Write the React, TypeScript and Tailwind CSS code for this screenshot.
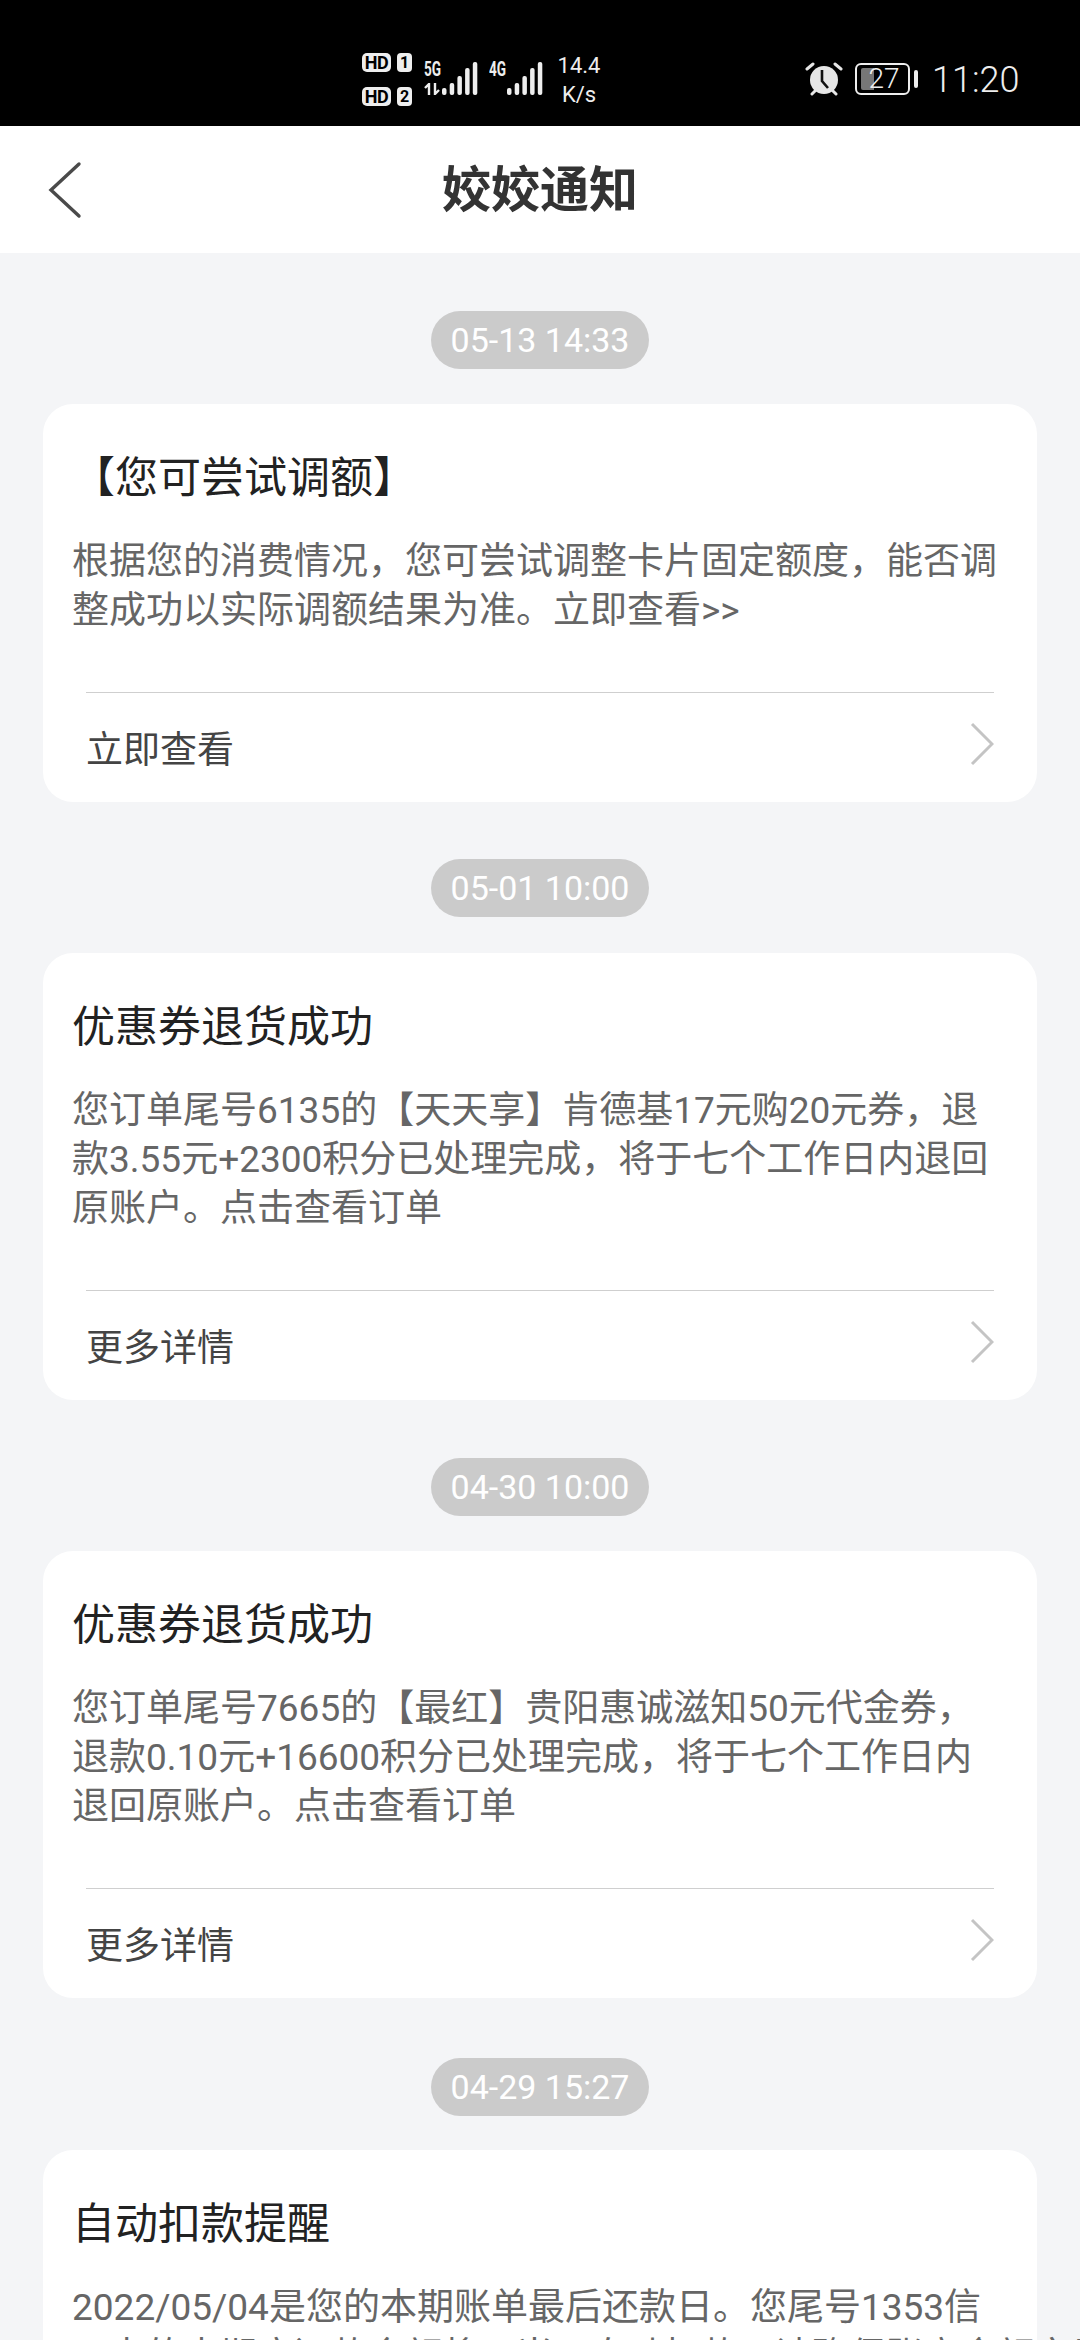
import React from "react";

const cjk = "font-['Roboto','Noto_Sans_CJK_SC',sans-serif]";

// Shared five-bar signal meter; both SIM slots use the same bar heights.
function SignalBars() {
  const heights = [7, 12, 19, 27, 33];
  return (
    <svg width="36" height="33" viewBox="0 0 36 33" className="shrink-0">
      {heights.map((h, i) => (
        <rect key={h} x={i * 7.7} y={33 - h} width={4.5} height={h} rx={2} fill="#eeeeee" />
      ))}
    </svg>
  );
}

function SimBadge({ n }: { n: string }) {
  return (
    <div className="flex gap-[6px]">
      <span className="w-[29px] h-[19px] rounded-[5px] bg-[#eeeeee] text-black text-[18px] font-bold leading-[19px] text-center tracking-[-0.5px]">HD</span>
      <span className="w-[15px] h-[19px] rounded-[4px] bg-[#eeeeee] text-black text-[16px] font-bold leading-[19px] text-center">{n}</span>
    </div>
  );
}

function NetworkLabel({ label, arrows }: { label: string; arrows?: boolean }) {
  return (
    <div className="w-[18px] h-[33px] relative shrink-0">
      <span className="absolute left-0 top-0 text-[20px] font-bold leading-[15px] scale-x-[0.68] origin-left">{label}</span>
      {arrows && (
        <svg className="absolute left-0 bottom-0" width="17" height="12" viewBox="0 0 17 12">
          <path d="M5 12V1L1 5M11 0v11l4-4" stroke="#eeeeee" strokeWidth="2.4" fill="none" />
        </svg>
      )}
    </div>
  );
}

function StatusBar() {
  return (
    <div className="h-[126px] bg-black text-[#eeeeee] font-['Roboto',sans-serif] flex items-start pl-[362px] pt-[53px]">
      <div className="flex flex-col gap-[15px] w-[62px] shrink-0">
        <SimBadge n="1" />
        <SimBadge n="2" />
      </div>
      <div className="flex mt-[9px] shrink-0">
        <NetworkLabel label="5G" arrows />
        <SignalBars />
        <div className="w-[11px]" />
        <NetworkLabel label="4G" />
        <SignalBars />
      </div>
      <div className="w-[60px] ml-[6px] -mt-[2px] text-center text-[22px] leading-[29px] shrink-0">
        <div>14.4</div>
        <div>K/s</div>
      </div>
      <svg className="ml-[196px] mt-[9px] shrink-0" width="38" height="34" viewBox="0 0 38 34">
        <circle cx="19" cy="18" r="14" fill="#e6e6e6" />
        <path d="M17 8v11l6 7" stroke="#111111" strokeWidth="2.6" fill="none" />
        <path d="M2 7l6-5M36 7l-6-5M7 32l3-3M31 32l-3-3" stroke="#e6e6e6" strokeWidth="3" strokeLinecap="round" />
      </svg>
      <div className="ml-[12px] mt-[10px] w-[55px] h-[32px] rounded-[6px] border-2 border-[#eeeeee] relative shrink-0">
        <div className="absolute left-[4px] top-[3px] bottom-[3px] w-[13px] bg-[#777777] rounded-l-[2px]" />
        <span className="absolute inset-0 pl-[3px] text-center text-[28px] leading-[28px] font-light">27</span>
      </div>
      <div className="ml-[4px] mt-[17px] w-[4px] h-[18px] rounded-full bg-[#eeeeee] shrink-0" />
      <span className="ml-[14px] mt-[6px] text-[36px] leading-[42px] font-light shrink-0">11:20</span>
    </div>
  );
}

function Header() {
  return (
    <div className={`h-[127px] bg-white flex items-center justify-center relative ${cjk}`}>
      <svg className="absolute left-[46px] top-1/2 -translate-y-1/2" width="36" height="58" viewBox="0 0 36 58">
        <path d="M33 3L5 29l28 26" stroke="#4a4a4a" strokeWidth="3.4" fill="none" strokeLinecap="round" />
      </svg>
      <h1 className="text-[49px] leading-[64px] font-bold text-[#333333] pt-[3px]">姣姣通知</h1>
    </div>
  );
}

function TimePill({ children }: { children: React.ReactNode }) {
  return (
    <div className="flex justify-center">
      <span className="w-[218px] h-[58px] rounded-full bg-[#cbcbcb] text-white text-[34px] leading-[58px] text-center font-['Roboto',sans-serif]">
        {children}
      </span>
    </div>
  );
}

function Card({ title, body, action }: { title: string; body: string[]; action?: string }) {
  return (
    <div className={`mx-[43px] bg-white rounded-[30px] ${action ? "" : "rounded-b-none"} ${cjk}`}>
      <div className="pt-[42px] pl-[29px] pr-[30px]">
        <h2 className="text-[43px] leading-[64px] text-[#222222] whitespace-nowrap">{title}</h2>
        <div className="mt-[27px] text-[#666666] text-[37px] leading-[49px] whitespace-nowrap">
          {body.map((line) => (
            <div key={line}>{line}</div>
          ))}
        </div>
      </div>
      {action && (
        <div className="mt-[57px] ml-[43px] mr-[43px]">
          <div className="h-px bg-[#cfcfcf]" />
          <div className="h-[109px] flex items-center justify-between">
            <span className="text-[37px] text-[#444444] mt-[6px]">{action}</span>
            <svg width="24" height="44" viewBox="0 0 24 44" className="-mt-[7px]">
              <path d="M2 2l20 20L2 42" stroke="#c4c4c4" strokeWidth="3" fill="none" />
            </svg>
          </div>
        </div>
      )}
    </div>
  );
}

export default function App() {
  return (
    <div className="w-[1080px] h-[2340px] overflow-hidden bg-[#f4f5f7]">
      <StatusBar />
      <Header />
      <main className="pt-[58px] flex flex-col">
        <TimePill>05-13 14:33</TimePill>
        <div className="mt-[35px]">
          <Card
            title="【您可尝试调额】"
            body={["根据您的消费情况，您可尝试调整卡片固定额度，能否调", "整成功以实际调额结果为准。立即查看>>"]}
            action="立即查看"
          />
        </div>
        <div className="mt-[57px]"><TimePill>05-01 10:00</TimePill></div>
        <div className="mt-[36px]">
          <Card
            title="优惠券退货成功"
            body={["您订单尾号6135的【天天享】肯德基17元购20元券，退", "款3.55元+2300积分已处理完成，将于七个工作日内退回", "原账户。点击查看订单"]}
            action="更多详情"
          />
        </div>
        <div className="mt-[58px]"><TimePill>04-30 10:00</TimePill></div>
        <div className="mt-[35px]">
          <Card
            title="优惠券退货成功"
            body={["您订单尾号7665的【最红】贵阳惠诚滋知50元代金券，", "退款0.10元+16600积分已处理完成，将于七个工作日内", "退回原账户。点击查看订单"]}
            action="更多详情"
          />
        </div>
        <div className="mt-[60px]"><TimePill>04-29 15:27</TimePill></div>
        <div className="mt-[34px]">
          <Card
            title="自动扣款提醒"
            body={["2022/05/04是您的本期账单最后还款日。您尾号1353信", "用卡的本期应还款金额将于当日自动扣款，请确保账户余额充足"]}
          />
        </div>
      </main>
    </div>
  );
}
